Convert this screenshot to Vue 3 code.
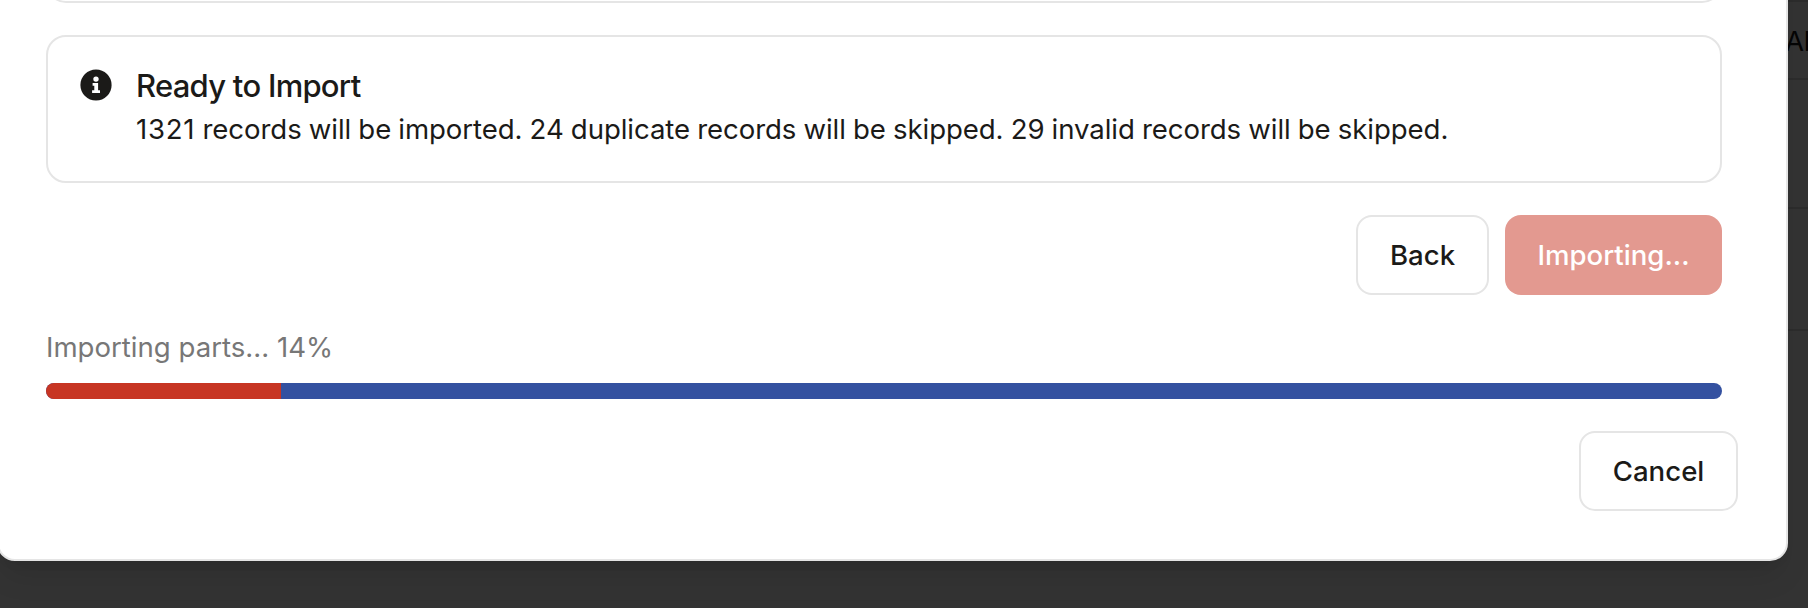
<script setup>
const progress = 14
const imported = 1321
const duplicates = 24
const invalid = 29
</script>

<template>
  <div class="screen">
    <section class="dialog">
      <div class="previous-card"></div>
      <div class="alert">
        <svg class="info" viewBox="0 0 32 32" aria-hidden="true">
          <circle cx="16" cy="16" r="15.6" fill="#1b1a18" />
          <circle cx="16" cy="10.1" r="2.7" fill="#fff" />
          <path d="M12.6 14h5.5v7.3h1.9v2.8h-7.9v-2.8h2.2v-4.5h-1.7z" fill="#fff" />
        </svg>
        <div class="alert-text">
          <h5>Ready to Import</h5>
          <p><span class="count">{{ imported }}</span> records will be imported. {{ duplicates }} duplicate records will be skipped. {{ invalid }} invalid records will be skipped.</p>
        </div>
      </div>
      <div class="actions">
        <button class="btn back"><span>Back</span></button>
        <button class="btn primary" disabled><span>Importing...</span></button>
      </div>
      <div class="status">Importing parts... {{ progress }}%</div>
      <div class="track"><div class="fill" :style="{ width: progress + '%' }"></div></div>
      <div class="footer">
        <button class="btn cancel"><span>Cancel</span></button>
      </div>
    </section>
    <aside class="behind">
      <div class="row top"></div>
      <div class="row head"><span>Al</span></div>
      <div class="row first"></div>
      <div class="row second"></div>
    </aside>
  </div>
</template>

<style>
body { margin: 0; overflow: hidden; }
</style>

<style scoped>
.screen, .screen * { box-sizing: border-box; }
.screen {
  width: 1808px;
  height: 608px;
  display: flex;
  align-items: flex-start;
  overflow: hidden;
  background: #333;
  color: #1b1a18;
  font-family: Inter, "Liberation Sans", sans-serif;
}
.dialog {
  position: relative;
  z-index: 1;
  flex: none;
  width: 1791px;
  height: 660.5px;
  margin: -100px 0 0 -3px;
  padding: 0 0 0 47px;
  background: #fff;
  border: 2px solid #e5e5e5;
  border-radius: 18px;
  box-shadow: 0 20px 30px -6px rgba(0, 0, 0, 0.1), 0 8px 12px -8px rgba(0, 0, 0, 0.1);
}
.previous-card {
  width: 1676px;
  height: 101px;
  border: 2px solid #e5e5e5;
  border-radius: 20px;
}
.alert {
  display: flex;
  width: 1676px;
  height: 148px;
  margin-top: 32px;
  padding: 32px 32px 0;
  border: 2px solid #e5e5e5;
  border-radius: 20px;
}
.info { width: 32px; height: 32px; flex: none; }
.alert-text { margin-left: 24px; white-space: nowrap; }
h5 {
  margin: 1px 0 0;
  font-size: 31px;
  line-height: 32px;
  font-weight: 500;
  letter-spacing: -0.73px;
}
p {
  margin: 5px 0 0;
  font-size: 27.6px;
  line-height: 44px;
  letter-spacing: -0.08px;
  word-spacing: -0.5px;
}
.count { letter-spacing: 0.75px; }
.actions {
  display: flex;
  justify-content: flex-end;
  gap: 16px;
  width: 1676px;
  margin-top: 32px;
}
.btn {
  display: flex;
  align-items: center;
  justify-content: center;
  height: 80px;
  padding: 0;
  background: #fff;
  border: 2px solid #e5e5e5;
  border-radius: 16px;
  color: #1b1a18;
  font: 500 27.6px/40px Inter, "Liberation Sans", sans-serif;
}
.back { width: 133px; }
.primary { width: 217px; background: #e39990; border: 0; color: #fff; }
.status {
  margin-top: 32px;
  height: 40px;
  font-size: 27.6px;
  line-height: 41px;
  color: #777;
  white-space: nowrap;
}
.track {
  width: 1676px;
  height: 16px;
  margin-top: 16px;
  background: #3451a0;
  border-radius: 8px;
  overflow: hidden;
}
.fill { height: 100%; background: #c73523; }
.footer {
  display: flex;
  justify-content: flex-end;
  width: 1692px;
  margin-top: 31.5px;
}
.cancel { width: 159px; }
.behind { flex: none; width: 20px; }
.row { border-bottom: 2px solid #2c2c2c; }
.top { height: 2px; }
.head {
  height: 78px;
  padding-top: 19px;
  font-size: 27.6px;
  line-height: 40px;
  color: #050505;
  white-space: nowrap;
}
.head span { margin-left: -3px; letter-spacing: -0.3px; }
.first { height: 129px; }
.second { height: 122px; }
</style>
